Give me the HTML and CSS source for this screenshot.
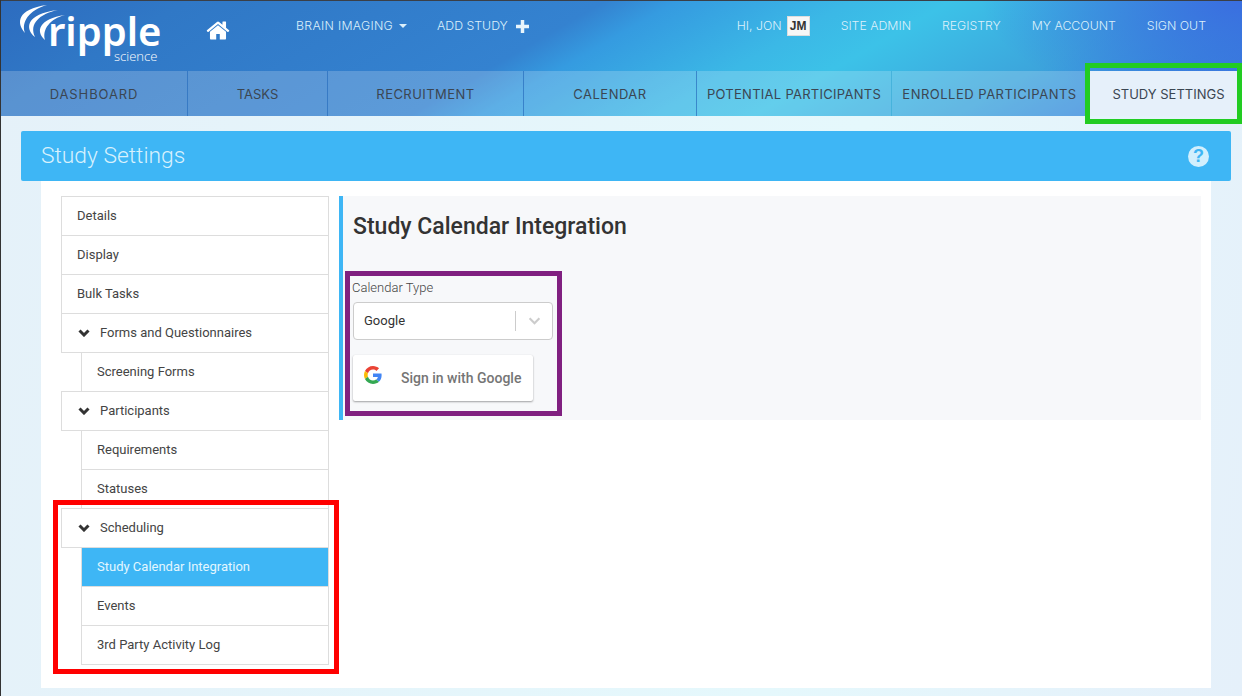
FILE: index.html
```html
<!DOCTYPE html>
<html lang="en">
<head>
<meta charset="utf-8">
<title>Study Settings</title>
<link rel="stylesheet" href="styles.css">
</head>
<body>
<div class="masthead">
  <header class="topbar">
    <a class="logo">
      <svg class="logo-waves" viewBox="0 0 60 50" width="60" height="50" aria-hidden="true">
        <path d="M10 30C1 20 2 6 32 2 14 7 6 19 10 30Z"/>
        <path d="M20 34C10 26 10 11 43 7 24 11 14 21 20 34Z"/>
        <path d="M30 37C20 28 24 16 50 12 35 16 27 26 30 37Z"/>
      </svg>
      <span class="logo-name">ripple</span>
      <span class="logo-sub">science</span>
    </a>
    <svg class="home" viewBox="0 0 1664 1792" width="24" height="25" aria-hidden="true"><path d="M1408 992v480q0 26-19 45t-45 19h-384v-384h-256v384h-384q-26 0-45-19t-19-45v-480q0-1 .5-3t.5-3l575-474 575 474q1 2 1 6zm223-69l-62 74q-8 9-21 11h-3q-13 0-21-7l-692-577-692 577q-12 8-24 7-13-2-21-11l-62-74q-8-10-7-23.5t11-21.5l719-599q32-26 76-26t76 26l244 204v-195q0-14 9-23t23-9h192q14 0 23 9t9 23v408l219 182q10 8 11 21.5t-7 23.5z"/></svg>
    <nav class="nav-left">
      <a class="nav-link brain">BRAIN IMAGING<span class="caret"></span></a>
      <a class="nav-link">ADD STUDY<svg class="plus" viewBox="0 0 12 12" width="13" height="13" aria-hidden="true"><path d="M4.400 0h3.200v4.400H12v3.200H7.600V12H4.400V7.600H0V4.400h4.400z"/></svg></a>
    </nav>
    <nav class="nav-right">
      <a class="nav-link hi">HI, JON<span class="initials">JM</span></a>
      <a class="nav-link">SITE ADMIN</a>
      <a class="nav-link">REGISTRY</a>
      <a class="nav-link">MY ACCOUNT</a>
      <a class="nav-link">SIGN OUT</a>
    </nav>
  </header>
  <nav class="tabs">
    <a class="tab t1">DASHBOARD</a>
    <a class="tab t2">TASKS</a>
    <a class="tab t3">RECRUITMENT</a>
    <a class="tab t4">CALENDAR</a>
    <a class="tab t5">POTENTIAL PARTICIPANTS</a>
    <a class="tab t6">ENROLLED PARTICIPANTS</a>
    <a class="tab t7 active">STUDY SETTINGS</a>
  </nav>
</div>

<main class="page">
  <div class="title-bar">
    <h1>Study Settings</h1>
    <span class="help">?</span>
  </div>
  <div class="panel">
    <aside class="sidenav">
      <a class="row">Details</a>
      <a class="row">Display</a>
      <a class="row">Bulk Tasks</a>
      <a class="row group"><svg class="chev" viewBox="0 0 12 8" width="12" height="8" aria-hidden="true"><path d="M1.500 1.500 6 6l4.500-4.500"/></svg>Forms and Questionnaires</a>
      <a class="row sub">Screening Forms</a>
      <a class="row group"><svg class="chev" viewBox="0 0 12 8" width="12" height="8" aria-hidden="true"><path d="M1.500 1.500 6 6l4.500-4.500"/></svg>Participants</a>
      <a class="row sub">Requirements</a>
      <a class="row sub">Statuses</a>
      <a class="row group"><svg class="chev" viewBox="0 0 12 8" width="12" height="8" aria-hidden="true"><path d="M1.500 1.500 6 6l4.500-4.500"/></svg>Scheduling</a>
      <a class="row sub current">Study Calendar Integration</a>
      <a class="row sub">Events</a>
      <a class="row sub">3rd Party Activity Log</a>
    </aside>
    <section class="content">
      <h2>Study Calendar Integration</h2>
      <label class="field-label">Calendar Type</label>
      <div class="select">
        <span class="select-value">Google</span>
        <span class="select-sep"></span>
        <svg class="select-arrow" viewBox="0 0 14 9" width="13" height="8" aria-hidden="true"><path d="M1.500 1.500 7 7l5.500-5.500"/></svg>
      </div>
      <button class="google-btn" type="button">
        <svg viewBox="0 0 48 48" width="18" height="18" aria-hidden="true">
          <path fill="#EA4335" d="M24 9.500c3.540 0 6.710 1.220 9.210 3.600l6.850-6.850C35.900 2.380 30.470 0 24 0 14.620 0 6.510 5.380 2.560 13.220l7.980 6.190C12.430 13.720 17.740 9.500 24 9.500z"/>
          <path fill="#4285F4" d="M46.980 24.550c0-1.570-.15-3.090-.38-4.550H24v9.020h12.940c-.58 2.960-2.260 5.480-4.780 7.180l7.730 6c4.510-4.180 7.090-10.360 7.090-17.650z"/>
          <path fill="#FBBC05" d="M10.530 28.590c-.48-1.450-.76-2.990-.76-4.590s.27-3.140.76-4.590l-7.980-6.190C.92 16.460 0 20.120 0 24c0 3.880.92 7.540 2.560 10.780l7.970-6.190z"/>
          <path fill="#34A853" d="M24 48c6.480 0 11.930-2.130 15.890-5.810l-7.730-6c-2.150 1.450-4.920 2.300-8.160 2.300-6.260 0-11.570-4.220-13.470-9.910l-7.980 6.190C6.510 42.620 14.620 48 24 48z"/>
        </svg>
        <span>Sign in with Google</span>
      </button>
    </section>
  </div>
</main>

<div class="mark mark-green"></div>
<div class="mark mark-purple"></div>
<div class="mark mark-red"></div>
</body>
</html>
```
FILE: styles.css
```css
* { box-sizing: border-box; }
html, body { margin: 0; height: 696px; overflow: hidden; }
body {
  position: relative;
  font-family: Roboto, "Liberation Sans", sans-serif;
  color: #333;
  border-left: 1px solid #333;
  background: linear-gradient(100deg, #e5f1f9 0%, #e5f8fc 65%, #e5f0fa 100%);
}
a { text-decoration: none; color: inherit; }

.masthead {
  border-top: 1px solid #3a3f47;
  background:
    radial-gradient(260px 110px at 100% 0, #3a6ee0 0%, rgba(58, 110, 224, 0) 100%),
    linear-gradient(150deg, #2d6cbf 0%, #3078c6 13%, #3482d0 42%, #359be0 47%, #3bb8e6 59%, #3cc2e8 66%, #3ca5dc 80%, #3888dc 90%, #3a70e0 100%);
}
.topbar {
  height: 70px;
  display: flex;
  align-items: flex-start;
  color: #dcf0fb;
}
.logo {
  position: relative;
  width: 205px;
  height: 70px;
  flex: none;
  color: #fff;
}
.logo-waves { position: absolute; left: 14px; top: 2px; fill: #fff; }
.logo-name {
  position: absolute;
  left: 47px;
  top: 11px;
  font: 600 40px/38px "Noto Sans", sans-serif;
}
.logo-sub {
  position: absolute;
  left: 113px;
  top: 49px;
  font: 300 13px/12px "Open Sans", sans-serif;
}
.home { fill: #fff; flex: none; margin-top: 17px; }
.nav-left, .nav-right {
  display: flex;
  align-items: center;
  height: 50px;
}
.nav-left { margin-left: 66px; gap: 30px; }
.nav-right { margin-left: auto; gap: 31px; padding-right: 36px; }
.nav-link {
  font: 300 12.300px/16px Inter, sans-serif;
  display: flex;
  align-items: center;
  white-space: nowrap;
}
.brain { letter-spacing: .3px; }
.caret {
  width: 0; height: 0;
  margin-left: 6px;
  border: 4px solid transparent;
  border-top-color: #dcf0fb;
  border-bottom: 0;
}
.plus { fill: #e8f5fc; margin-left: 8px; }
.hi { gap: 5px; }
.initials {
  width: 23px; height: 20px;
  background: #f7f7f7;
  border: 1px solid #ddd;
  color: #333;
  font: 700 12px/18px "Liberation Sans", sans-serif;
  text-align: center;
}

.tabs { display: flex; height: 45px; }
.tab {
  display: flex;
  align-items: center;
  justify-content: center;
  background: rgba(255, 255, 255, .2);
  border-right: 1px solid rgba(40, 110, 190, .7);
  font: 400 13px/16px Inter, sans-serif;
  color: #3b4652;
  white-space: nowrap;
}
.t1 { width: 187px; letter-spacing: .9px; }
.t2 { width: 140px; }
.t3 { width: 196px; letter-spacing: .45px; }
.t4 { width: 173px; letter-spacing: .5px; }
.t5 { width: 195px; letter-spacing: .27px; border-right-color: #46b3dc; }
.t6 { width: 195px; letter-spacing: .5px; border-right: 0; }
.t7 { flex: 1; }
.tab.active { background: #e6f0fa; border: 0; padding-left: 8px; }

.page { padding: 15px 11px 0 20px; }
.title-bar {
  height: 50px;
  background: #3eb6f5;
  border-radius: 2px;
  display: flex;
  align-items: center;
  justify-content: space-between;
  padding: 0 22px 0 20px;
}
h1 {
  margin: 0;
  font: 300 22.800px/30px Roboto, sans-serif;
  color: #d8f1fd;
}
.help {
  width: 21px; height: 21px;
  border-radius: 50%;
  background: #d2effd;
  color: #3eb6f5;
  font: 700 18px/21px "Liberation Sans", sans-serif;
  text-align: center;
}
.panel {
  margin: 0 20px;
  height: 507px;
  background: #fff;
  padding: 15px 10px 0 20px;
  display: flex;
  align-items: flex-start;
  gap: 10px;
}
.sidenav { width: 268px; flex: none; display: flex; flex-direction: column; }
.row {
  height: 40px;
  margin-bottom: -1px;
  border: 1px solid #ddd;
  background: #fff;
  padding-left: 15px;
  font: 400 13px/38px Roboto, sans-serif;
  color: #444;
  display: flex;
  align-items: center;
  white-space: nowrap;
}
.group { padding-left: 16px; }
.sub { margin-left: 20px; }
.current { background: #3eb6f5; color: #e3f6ff; }
.chev { fill: none; stroke: #333; stroke-width: 3; margin-right: 10px; flex: none; }

.content {
  flex: 1;
  height: 224px;
  background: #f7f8fa;
  border-left: 4px solid #3eb6f5;
  padding: 0 10px;
}
h2 {
  margin: 0;
  padding-top: 17px;
  font: 500 23px/28px Roboto, sans-serif;
  color: #333;
  height: 84px;
}
.field-label {
  display: block;
  margin-left: -1px;
  font: 300 13px/16px Roboto, sans-serif;
  color: #444;
}
.select {
  margin-top: 6px;
  width: 200px;
  height: 38px;
  background: #fff;
  border: 1px solid #ccc;
  border-radius: 4px;
  display: flex;
  align-items: center;
  padding-left: 10px;
  font: 400 13px/16px Roboto, sans-serif;
}
.select-value { flex: 1; }
.select-sep { width: 1px; height: 20px; background: #ccc; }
.select-arrow { fill: none; stroke: #ccc; stroke-width: 2.400; margin: 0 11px 0 12px; }
.google-btn {
  margin-top: 15px;
  width: 180px;
  height: 46px;
  display: flex;
  align-items: center;
  gap: 19px;
  padding: 0 0 0 11px;
  background: #fff;
  border: 0;
  border-radius: 2px;
  box-shadow: 0 1px 2px rgba(0,0,0,.35), 0 0 1px rgba(0,0,0,.08);
  font: 500 14px/16px Roboto, sans-serif;
  color: #757575;
  white-space: nowrap;
}
.google-btn svg { margin-top: -6px; }

.mark { position: absolute; border-style: solid; border-width: 5px; pointer-events: none; }
.mark-green { left: 1084px; top: 63px; width: 157px; height: 61px; border-color: #22cc22; }
.mark-purple { left: 344px; top: 271px; width: 217px; height: 145px; border-color: #802080; }
.mark-red { left: 52px; top: 500px; width: 286px; height: 174px; border-color: #ff0000; }
```
